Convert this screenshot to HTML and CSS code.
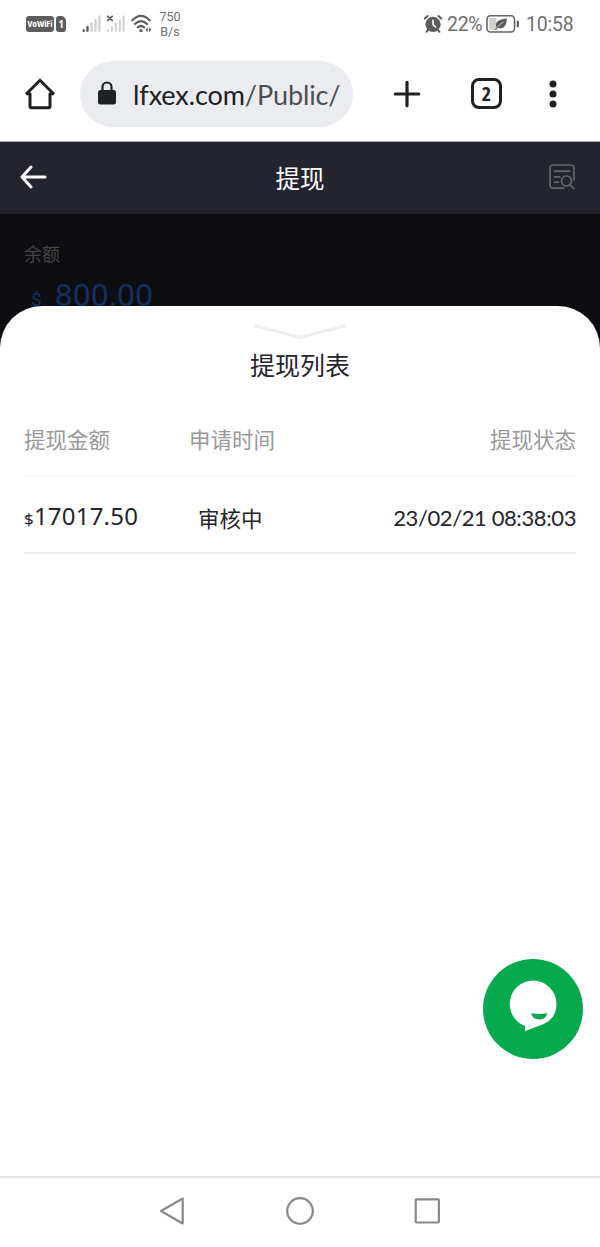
FILE: index.html
```html
<!DOCTYPE html>
<html lang="zh-CN">
<head>
    <meta charset="UTF-8">
    <meta name="viewport" content="width=device-width, initial-scale=1.0">
    <title>提现</title>
    <link rel="stylesheet" href="styles.css">
</head>
<body>
    <div class="status-bar">
        <span class="vowifi">VoWiFi</span>
        <span class="sim">1</span>
        <svg class="signal" width="20" height="18" viewBox="0 0 20 18" stroke-width="2.4" stroke-linecap="round">
            <path d="M1.7 15.2v.6M5.5 12v3.8" stroke="#5c5c5c"/>
            <path d="M9.6 8.5v7.3M13.5 5v10.8M17.4 1.5v14.3" stroke="#d2d2d2"/>
        </svg>
        <svg class="signal-off" width="20" height="18" viewBox="0 0 20 18" stroke-width="2.2" stroke-linecap="round">
            <path d="M2 15.2v.6M6 12v3.8M9.9 8.5v7.3M13.8 5v10.8M17.6 1.5v14.3" stroke="#d2d2d2"/>
            <path d="M1.8 1.4l4.4 4M6.2 1.4l-4.4 4" stroke="#5c5c5c" stroke-width="1.9"/>
        </svg>
        <svg class="wifi" width="22" height="20" viewBox="0 0 22 20" fill="none" stroke="#5c5c5c" stroke-width="2.2" stroke-linecap="round">
            <path d="M1.3 6.2Q10 -2.4 18.7 6.2M4 10Q10 4.2 16 10M6.8 13.4Q10 10.6 13 13.4"/>
            <circle cx="10" cy="16.6" r="1.7" fill="#5c5c5c" stroke="none"/>
            <path d="M16.8 13.600v4.400l-2.500-2.200zM18 13.600v4.400l2.500-2.200z" fill="#5c5c5c" stroke="none"/>
        </svg>
        <span class="speed">750<br>B/s</span>
        <svg class="alarm" width="20" height="20" viewBox="0 0 20 20" fill="none" stroke-linecap="round">
            <circle cx="10" cy="10.3" r="7.6" fill="#5c5c5c"/>
            <path d="M1.8 4.600L4.600 2M18.200 4.600L15.400 2M5 16l-1.500 1.800M15 16l1.500 1.800" stroke="#5c5c5c" stroke-width="2"/>
            <path d="M10 6.3v4.4l2.6 2.3" stroke="#fff" stroke-width="1.6"/>
        </svg>
        <span class="percent">22%</span>
        <svg class="battery" width="34" height="20" viewBox="0 0 34 20">
            <rect x="1" y="1.7" width="27.5" height="16.3" rx="3.5" fill="#fff" stroke="#666" stroke-width="1.6"/>
            <path d="M3.3 4h7v11.7h-7z" fill="#d0d0d0"/>
            <path d="M20.8 4.5C13 5 8 8.5 10.6 13.2L8.8 15.4l1 .7 1.9-2c6 2 9-3 9.1-9.6z" fill="#5c5c5c"/>
            <path d="M11.5 13.5q2-3.5 6-5.5" fill="none" stroke="#ddd" stroke-width=".8"/>
            <path d="M31.8 6.8v6.4" stroke="#5c5c5c" stroke-width="2.2"/>
        </svg>
        <span class="clock">10:58</span>
    </div>

    <div class="browser-bar">
        <svg class="home" width="32" height="32" viewBox="0 0 32 32" fill="none" stroke="#202124" stroke-width="3" stroke-linejoin="round">
            <path d="M2 16.2L16 2.3l14 13.9" stroke-linejoin="miter"/>
            <path d="M2.4 15.8H6V28q0 1.8 1.8 1.8h16.4Q26 29.8 26 28V15.8h3.6"/>
        </svg>
        <div class="address">
            <svg width="20" height="26" viewBox="0 0 20 26">
                <rect x="1" y="9" width="18" height="14.5" rx="2.5" fill="#202124"/>
                <path d="M5.5 11V6a4.5 4.5 0 0 1 9 0V11" fill="none" stroke="#202124" stroke-width="2.2"/>
            </svg>
            <span class="url">lfxex.com<span class="path">/Public/</span></span>
        </div>
        <svg class="plus" width="28" height="28" viewBox="0 0 28 28" stroke="#202124" stroke-width="3.2" stroke-linecap="round">
            <path d="M14 2.3v23.4M2.3 14h23.4"/>
        </svg>
        <span class="tabs">2</span>
        <svg class="dots" width="8" height="28" viewBox="0 0 8 28" fill="#202124">
            <circle cx="4" cy="4" r="3.5"/>
            <circle cx="4" cy="14" r="3.5"/>
            <circle cx="4" cy="24" r="3.5"/>
        </svg>
    </div>

    <header>
        <svg width="28" height="24" viewBox="0 0 28 24" fill="none" stroke="#fff" stroke-width="3" stroke-linecap="round" stroke-linejoin="round">
            <path d="M11 2L2 12l9 10M2.5 12H25"/>
        </svg>
        <h1>提现</h1>
        <svg width="28" height="28" viewBox="0 0 28 28" fill="none" stroke="#64646c" stroke-width="1.7" stroke-linecap="round">
            <path d="M16 25.2H5.5Q2 25.2 2 21.7V5.5Q2 2 5.5 2h17Q26 2 26 5.5V17M6.5 8.2h15M6.5 13.8h5.500M6.5 19.2h4"/>
            <circle cx="18.5" cy="18" r="5"/>
            <path d="M22 21.7l4 4"/>
        </svg>
    </header>

    <main>
        <section class="balance">
            <p class="label">余额</p>
            <p class="money"><span>$</span>800.00</p>
        </section>
        <section class="sheet">
            <svg class="handle" width="96" height="18" viewBox="0 0 96 18" fill="none" stroke="#eee" stroke-width="3" stroke-linecap="round">
                <path d="M3 3l45 11.5L93 3"/>
            </svg>
            <h2>提现列表</h2>
            <div class="row head">
                <span>提现金额</span>
                <span>申请时间</span>
                <span>提现状态</span>
            </div>
            <div class="row item">
                <span class="amount"><small>$</small>17017.50</span>
                <span class="state">审核中</span>
                <span class="time">23/02/21 08:38:03</span>
            </div>
        </section>
    </main>

    <button class="chat" aria-label="chat">
        <svg width="100" height="100" viewBox="0 0 100 100">
            <path d="M50 21.5a23.5 23.5 0 0 1 23.5 23.5c0 10-5 17-14 20.5L42 72v-5A23.5 23.5 0 0 1 50 21.5z" fill="#fff"/>
            <path d="M48 54.3q8 1.2 16.300 0-1.500 6.200-8 6.200t-8.300-6.200z" fill="#06a94d"/>
        </svg>
    </button>

    <nav>
        <svg width="28" height="30" viewBox="0 0 28 30"><path d="M3 15L24.7 2.5v25z"/></svg>
        <svg width="30" height="30" viewBox="0 0 30 30"><circle cx="15" cy="15" r="12.8"/></svg>
        <svg width="28" height="30" viewBox="0 0 28 30"><rect x="1.7" y="3.3" width="23.2" height="23.2" rx="1"/></svg>
    </nav>
</body>
</html>
```

FILE: styles.css
```css
* {
    box-sizing: border-box;
}
body {
    font-family: Lato, 'Noto Sans CJK SC', sans-serif;
    margin: 0;
    height: 1247px;
    display: flex;
    flex-direction: column;
    background: #fff;
    color: #24242c;
    overflow: hidden;
}
h1, h2, p {
    margin: 0;
    font-weight: 400;
}
svg {
    display: block;
    flex: none;
}
.status-bar {
    height: 48px;
    display: flex;
    align-items: center;
    padding: 0 26px;
    color: #707070;
    font-family: Roboto, sans-serif;
}
.vowifi, .sim {
    height: 16px;
    line-height: 16px;
    background: #5c5c5c;
    color: #fff;
    border-radius: 3px;
    text-align: center;
    font-family: 'Open Sans', sans-serif;
    font-stretch: condensed;
    font-weight: 700;
}
.vowifi {
    width: 28px;
    font-size: 9.5px;
    letter-spacing: -0.1px;
}
.sim {
    width: 10px;
    margin-left: 2px;
    font-size: 11px;
    border-top-right-radius: 5px;
}
.signal {
    margin-left: 16px;
}
.signal-off {
    margin-left: 4px;
}
.wifi {
    margin-left: 5px;
}
.speed {
    width: 24px;
    margin-left: 5px;
    font-size: 12.5px;
    line-height: 15px;
    text-align: center;
}
.alarm {
    margin-left: auto;
}
.percent {
    width: 36px;
    margin-left: 4px;
    font-size: 19.5px;
    letter-spacing: -0.3px;
}
.battery {
    margin-left: 3px;
}
.clock {
    width: 48px;
    margin-left: 6px;
    font-size: 19.5px;
    letter-spacing: -0.2px;
}
.browser-bar {
    height: 94px;
    display: flex;
    align-items: center;
    padding: 0 43px 2px 24px;
    border-bottom: 1px solid #aaa;
}
.address {
    width: 273px;
    height: 66px;
    margin-left: 24px;
    padding-left: 17px;
    display: flex;
    align-items: center;
    border-radius: 33px;
    background: #ebecf0;
}
.url {
    margin: 2px 0 0 16px;
    font-size: 27px;
    letter-spacing: -0.1px;
    white-space: nowrap;
    color: #202124;
}
.path {
    color: #4c4d51;
}
.plus {
    margin-left: 40px;
}
.tabs {
    width: 31px;
    height: 31px;
    margin-left: 50px;
    border: 3px solid #202124;
    border-radius: 8px;
    font: 700 20px/25px 'Open Sans', sans-serif;
    font-stretch: condensed;
    text-align: center;
    color: #202124;
}
.dots {
    margin-left: auto;
}
header {
    height: 72px;
    padding: 0 24px 2px 20px;
    display: flex;
    align-items: center;
    justify-content: space-between;
    background: #24242e;
    color: #fff;
}
h1 {
    padding-left: 4px;
    font-size: 24.5px;
}
main {
    flex: 1;
    display: flex;
    flex-direction: column;
    background: #0e0d12;
}
.balance {
    height: 92px;
    padding: 27px 24px 0;
    overflow: hidden;
}
.label {
    font-size: 18px;
    line-height: 26px;
    color: #454545;
}
.money {
    margin-top: 8px;
    font-family: Roboto, sans-serif;
    font-size: 32px;
    line-height: 40px;
    color: #15305f;
}
.money span {
    margin: 0 13px 0 7px;
    font-size: 19px;
}
.sheet {
    flex: 1;
    padding: 17px 24px 0;
    border-radius: 42px 42px 0 0;
    background: #fff;
}
.handle {
    margin: 0 auto;
}
h2 {
    margin-top: 6px;
    font-size: 25px;
    line-height: 36px;
    text-align: center;
}
.row {
    display: grid;
    grid-template-columns: 165px 120px 1fr;
    align-items: center;
    border-bottom: 2px solid #f7f7f7;
}
.row :last-child {
    text-align: right;
}
.head {
    height: 75px;
    margin-top: 19px;
    font-size: 21.5px;
    color: #999;
}
.item {
    height: 77px;
    padding-top: 5px;
    border-color: #eee;
}
.amount {
    font-family: 'Noto Sans', sans-serif;
    font-size: 24px;
    letter-spacing: 0.2px;
    padding-bottom: 4px;
    white-space: nowrap;
}
.amount small {
    font-size: 17px;
}
.state {
    padding-left: 9px;
    font-size: 21.5px;
}
.time {
    font-size: 22px;
    letter-spacing: -0.4px;
    white-space: nowrap;
}
/* floats over the sheet */
.chat {
    position: fixed;
    right: 17px;
    bottom: 188px;
    width: 100px;
    height: 100px;
    padding: 0;
    border: none;
    border-radius: 50%;
    background: #06a94d;
}
nav {
    height: 71px;
    padding-bottom: 3px;
    display: flex;
    justify-content: center;
    align-items: center;
    gap: 99px;
    border-top: 2px solid #e4e4e4;
    background: #fff;
}
nav svg {
    fill: none;
    stroke: #888;
    stroke-width: 2.2;
    stroke-linejoin: round;
}
```
